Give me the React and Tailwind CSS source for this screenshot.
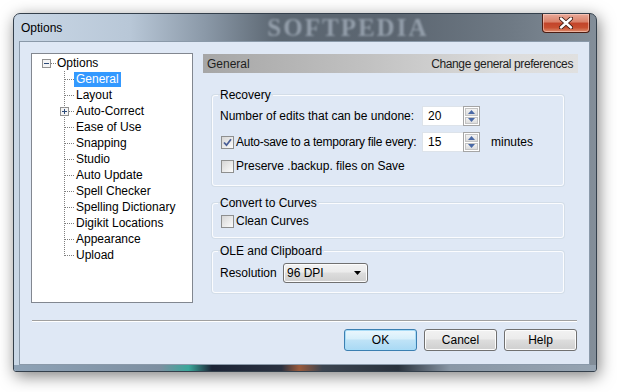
const treeItems = [
  "General",
  "Layout",
  "Auto-Correct",
  "Ease of Use",
  "Snapping",
  "Studio",
  "Auto Update",
  "Spell Checker",
  "Spelling Dictionary",
  "Digikit Locations",
  "Appearance",
  "Upload",
];

function ExpandBox({ x, y, minus }) {
  return (
    <g>
      <rect x={x + 0.5} y={y + 0.5} width="8" height="8" fill="#f4f4f4" stroke="#919191" />
      <line x1={x + 2} y1={y + 4.5} x2={x + 7} y2={y + 4.5} stroke="#2c4a78" />
      {!minus && <line x1={x + 4.5} y1={y + 2} x2={x + 4.5} y2={y + 7} stroke="#2c4a78" />}
    </g>
  );
}

function Branch({ last, plus }) {
  return (
    <svg width="42" height="16" className="shrink-0">
      <line x1="32.5" y1="0" x2="32.5" y2={last ? 9 : 16} stroke="#7f7f7f" strokeDasharray="1 1" />
      <line x1="33" y1="8.5" x2="42" y2="8.5" stroke="#7f7f7f" strokeDasharray="1 1" />
      {plus && <ExpandBox x={28} y={4} />}
    </svg>
  );
}

function Checkbox({ checked }) {
  return (
    <span className="flex h-[13px] w-[13px] shrink-0 items-center justify-center border border-[#8e8f8f] bg-gradient-to-br from-[#d6d6d6] to-[#fcfcfc]">
      {checked && (
        <svg width="9" height="9" viewBox="0 0 9 9">
          <path d="M1 4.5 L3.5 7.2 L8 1.2" fill="none" stroke="#4a5f97" strokeWidth="1.8" />
        </svg>
      )}
    </span>
  );
}

function Arrow({ up }) {
  return (
    <svg width="7" height="4" viewBox="0 0 7 4">
      <path d={up ? "M0 4 L3.5 0 L7 4 Z" : "M0 0 L3.5 4 L7 0 Z"} fill="#4a69a6" />
    </svg>
  );
}

function SpinBox({ value }) {
  return (
    <div className="flex h-[20px] shrink-0">
      <div className="flex w-[41px] items-center border border-r-0 border-[#dde3ea] bg-white pl-[5px]">{value}</div>
      <div className="flex w-[17px] flex-col gap-[1px] border border-[#a5a5a5] bg-white p-[1px]">
        <div className="flex flex-1 items-center justify-center border border-[#c3c3c3] bg-gradient-to-b from-[#f3f3f3] to-[#dcdcdc]">
          <Arrow up />
        </div>
        <div className="flex flex-1 items-center justify-center border border-[#c3c3c3] bg-gradient-to-b from-[#f3f3f3] to-[#dcdcdc]">
          <Arrow />
        </div>
      </div>
    </div>
  );
}

function Group({ title, children, className }) {
  return (
    <fieldset className={`rounded-[3px] border border-[#fbfcfe] shadow-[0_0_0_1px_#d3dde8] ${className}`}>
      <legend className="-ml-[2px] px-[2px] leading-[14px]">{title}</legend>
      {children}
    </fieldset>
  );
}

function Button({ label, primary }) {
  return (
    <button
      className={`h-[22px] w-[73px] rounded-[3px] border text-[12px] text-black ${
        primary
          ? "border-[#3c7fb1] bg-[linear-gradient(#ebf7fd,#d6effb_45%,#bfe3f7_50%,#a9d9f4)] shadow-[inset_0_0_0_1px_#a8dcf7]"
          : "border-[#707070] bg-[linear-gradient(#f2f2f2,#ebebeb_45%,#dddddd_50%,#cfcfcf)] shadow-[inset_0_0_0_1px_#fcfcfc]"
      }`}
    >
      {label}
    </button>
  );
}

export default function App() {
  return (
    <div className="h-[392px] w-[617px] overflow-hidden bg-white pl-[13px] pt-[13px] font-['Liberation_Sans',Arial,sans-serif] text-[12px] text-black">
      <div className="relative flex h-[359px] w-[584px] flex-col overflow-hidden rounded-t-[7px] rounded-b-[3px] border border-[#34404c] bg-[linear-gradient(90deg,#c9d7e6,#b8c7d7_20%,#8a98a7_33%,#5c6772_45%,#5b6570_65%,#6e7984_85%,#838e99)] shadow-[2px_4px_16px_rgba(0,0,0,0.5)]">
        {/* title bar */}
        <div className="flex h-[27px] items-start justify-between">
          <div className="flex h-[27px] flex-1 items-center pl-[7px]">
            <span className="text-[12px] text-black">Options</span>
            <span className="ml-[205px] font-['Liberation_Serif',serif] text-[25px] font-bold leading-[25px] tracking-[2px] text-[#949fab] blur-[1.3px]">
              SOFTPEDIA
            </span>
          </div>
          <div className="mr-[6px] flex h-[19px] w-[48px] items-center justify-center rounded-b-[4px] border border-t-0 border-[#4b1c12] bg-[linear-gradient(#e9a999,#d98068_45%,#c2442a_50%,#c84f30_75%,#dd8d6f)] shadow-[inset_0_0_0_1px_rgba(255,220,210,0.5)]">
            <svg width="14" height="12" viewBox="0 0 14 12">
              <path d="M2 1.5 L12 10.5 M12 1.5 L2 10.5" stroke="#3a1a12" strokeWidth="4.2" strokeLinecap="round" />
              <path d="M2 1.5 L12 10.5 M12 1.5 L2 10.5" stroke="#ffffff" strokeWidth="2.4" strokeLinecap="round" />
            </svg>
          </div>
        </div>

        {/* client */}
        <div className="ml-[5px] mr-[6px] flex h-[324px] flex-col border border-[#8a99a9] bg-[#dfe8f5]">
          <div className="flex pl-[11px] pt-[11px]">
            {/* tree */}
            <div className="h-[250px] w-[162px] border border-[#828790] bg-white pt-[1px]">
              <div className="flex h-[16px] items-center">
                <svg width="25" height="16" className="shrink-0">
                  <ExpandBox x={10} y={4} minus />
                  <line x1="19" y1="8.5" x2="25" y2="8.5" stroke="#7f7f7f" strokeDasharray="1 1" />
                </svg>
                <span className="leading-[16px]">Options</span>
              </div>
              {treeItems.map((item, i) => (
                <div key={item} className="flex h-[16px] items-center">
                  <Branch last={i === treeItems.length - 1} plus={item === "Auto-Correct"} />
                  <span className={`px-[2px] leading-[15px] ${i === 0 ? "bg-[#3399ff] text-white" : ""}`}>
                    {item}
                  </span>
                </div>
              ))}
            </div>

            {/* right panel */}
            <div className="ml-[10px] flex w-[375px] flex-col">
              <div className="mt-[1px] flex h-[19px] items-center justify-between whitespace-nowrap bg-[linear-gradient(90deg,#a6a6a6,#c2c2c2_45%,#dcdcdc_80%,#e0e0e0)] pl-[4px] pr-[5px] text-[#1e1e1e]">
                <span>General</span>
                <span className="tracking-[-0.4px]">Change general preferences</span>
              </div>

              <Group title="Recovery" className="ml-[9px] mt-[15px] w-[352px] pb-[11px] pl-[7px]">
                <div className="mt-[4px] flex h-[20px] items-center">
                  <span className="w-[202px] whitespace-nowrap">Number of edits that can be undone:</span>
                  <SpinBox value="20" />
                </div>
                <div className="mt-[6px] flex h-[20px] items-center">
                  <span className="ml-[1px] flex w-[201px] shrink-0 items-center gap-[2px] whitespace-nowrap">
                    <Checkbox checked />
                    <span className="tracking-[-0.25px]">Auto-save to a temporary file every:</span>
                  </span>
                  <SpinBox value="15" />
                  <span className="ml-[11px]">minutes</span>
                </div>
                <div className="mt-[6px] flex h-[16px] items-center gap-[2px] pl-[1px]">
                  <Checkbox />
                  <span>Preserve .backup. files on Save</span>
                </div>
              </Group>

              <Group title="Convert to Curves" className="ml-[9px] mt-[10px] w-[352px] pb-[8px] pl-[7px]">
                <div className="mt-[3px] flex h-[16px] items-center gap-[2px] pl-[1px]">
                  <Checkbox />
                  <span>Clean Curves</span>
                </div>
              </Group>

              <Group title="OLE and Clipboard" className="ml-[9px] mt-[6px] w-[352px] pb-[9px] pl-[7px]">
                <div className="mt-[5px] flex h-[20px] items-center">
                  <span className="w-[63px]">Resolution</span>
                  <div className="flex h-[20px] w-[85px] items-center justify-between rounded-[3px] border border-[#707070] bg-[linear-gradient(#f2f2f2,#ebebeb_45%,#dddddd_50%,#cfcfcf)] pl-[3px] pr-[6px] shadow-[inset_0_0_0_1px_#fcfcfc]">
                    <span>96 DPI</span>
                    <svg width="7" height="4" viewBox="0 0 7 4">
                      <path d="M0 0 L3.5 4 L7 0 Z" fill="#000" />
                    </svg>
                  </div>
                </div>
              </Group>
            </div>
          </div>

          <div className="ml-[12px] mt-[17px] h-[2px] w-[545px] border-t border-b border-t-[#a0a0a0] border-b-white" />

          <div className="mt-[7px] flex justify-end gap-[7px] pr-[12px]">
            <Button label="OK" primary />
            <Button label="Cancel" />
            <Button label="Help" />
          </div>
        </div>

        {/* bottom frame */}
        <div className="h-[6px] bg-[linear-gradient(90deg,#8ea2b6,#7d8fa1_25%,#3aa79a_30%,#1c2436_34%,#2a3140_46%,#9a5a3c_49%,#3b4450_53%,#2a323d_66%,#8a98a6_75%,#96a4b2_100%)]" />
      </div>
    </div>
  );
}
